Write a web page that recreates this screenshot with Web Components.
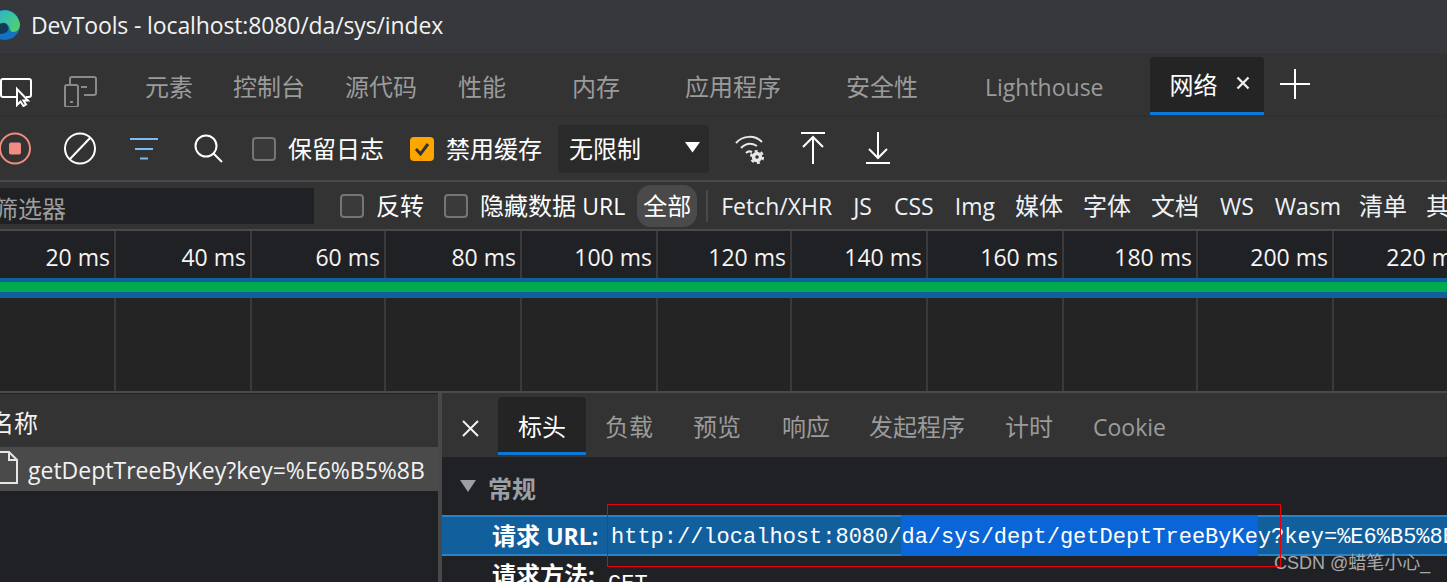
<!DOCTYPE html>
<html lang="zh-CN">
<head>
<meta charset="utf-8">
<title>DevTools</title>
<style>
html,body{margin:0;padding:0;background:#202124;}
body{width:1447px;height:582px;overflow:hidden;position:relative;font-family:"Open Sans","Noto Sans CJK SC",sans-serif;color:#fff;}
</style>
</head>
<body>
<title-bar>DevTools - localhost:8080/da/sys/index</title-bar>
<tab-strip></tab-strip>
<net-toolbar></net-toolbar>
<filter-bar></filter-bar>
<time-line></time-line>
<split-pane></split-pane>
<water-mark>CSDN @蜡笔小心_</water-mark>

<script>
const FONT = '"Open Sans","Noto Sans CJK SC",sans-serif';

class TitleBar extends HTMLElement{
    connectedCallback(){
        this.attachShadow({mode:"open"}).innerHTML = `
        <style>
            :host{display:flex;align-items:center;height:53px;background:#37383c;box-sizing:border-box;padding-bottom:4px;}
            svg{width:20px;height:34px;flex:none;margin-top:3px;}
            .t{margin-left:11px;font:23px/30px ${FONT};color:#f2f2f2;white-space:nowrap;letter-spacing:-.13px;}
        </style>
        <svg viewBox="0 0 20 34">
            <defs>
                <linearGradient id="eg" x1="0" y1="0" x2="1" y2="1"><stop offset="0" stop-color="#2cb5c9"/><stop offset="1" stop-color="#58d45f"/></linearGradient>
            </defs>
            <circle cx="5" cy="16" r="15" fill="#1272c4"/>
            <path d="M0 2C8 -1 18 4 20 15C20 20 17 23 13 23C9 23 11 18 7 15C4 13 1 14 0 15Z" fill="url(#eg)"/>
            <path d="M0 15C3 13 7 14 8 18C9 22 6 25 0 25Z" fill="#123a52"/>
        </svg>
        <div class="t"><slot></slot></div>`;
    }
}

class DtTab extends HTMLElement{
    connectedCallback(){
        this.attachShadow({mode:"open"}).innerHTML = `
        <style>
            :host{display:flex;align-items:center;height:100%;color:#9b9b9b;white-space:nowrap;font:24px/30px ${FONT};box-sizing:border-box;padding-top:2px;}
            :host([sel]){background:#242424;color:#fff;border-radius:4px 4px 0 0;box-shadow:inset 0 -3px 0 #0a78d7;}
        </style>
        <slot></slot>`;
    }
}

class TabStrip extends HTMLElement{
    connectedCallback(){
        const items = [["元素",145],["控制台",40],["源代码",40],["性能",41],["内存",66],["应用程序",65],["安全性",65],["Lighthouse",67]];
        this.attachShadow({mode:"open"}).innerHTML = `
        <style>
            :host{display:flex;align-items:stretch;height:64px;background:#333;box-sizing:border-box;padding:4px 0 1px;border-bottom:1px solid #2e2e2e;position:relative;}
            .ico{position:absolute;top:20px;}
            dt-tab{flex:none;}
            .sel{margin-left:46px;padding:0 0 2px 20px;width:114px;justify-content:flex-start;gap:18px;}
            .plus{margin-left:16px;align-self:center;margin-top:-4px;flex:none;}
            .x{margin-top:-4px;flex:none;}
            .lat{font-size:23px;}
        </style>
        <svg class="ico" style="left:0" width="33" height="34" viewBox="0 0 33 34" fill="none" stroke="#fff" stroke-width="2">
            <path d="M16 24H3C1.600 24 1 23.400 1 22V8C1 6.600 1.600 6 3 6H29C30.400 6 31 6.600 31 8V22C31 23.400 30.400 24 29 24H26"/>
            <path d="M17 16V32L20.500 28.500L23.500 33L26 31.500L23.500 27.500H28Z" fill="#333" stroke-width="2"/>
        </svg>
        <svg class="ico" style="left:64px" width="33" height="34" viewBox="0 0 33 34" fill="none" stroke="#8a8a8a" stroke-width="2">
            <path d="M6 11V6C6 4.500 7 4 8 4H30C31.500 4 32 5 32 6V20C32 21.500 31 22 30 22H20"/>
            <rect x="1" y="12" width="13" height="22" rx="2"/>
            <path d="M17 14H23M6 29H9"/>
        </svg>
        ${items.map(([t,m])=>`<dt-tab style="margin-left:${m}px" class="${t=="Lighthouse"?"lat":""}">${t}</dt-tab>`).join("")}
        <dt-tab class="sel" sel>网络
            <svg class="x" width="14" height="14" viewBox="0 0 14 14" stroke="#eee" stroke-width="2.400"><path d="M1.500 1.500L12.500 12.500M12.500 1.500L1.500 12.500"/></svg>
        </dt-tab>
        <svg class="plus" width="30" height="30" viewBox="0 0 30 30" stroke="#fff" stroke-width="2"><path d="M0 15H30M15 0V30"/></svg>`;
    }
}

class DtCheck extends HTMLElement{
    connectedCallback(){
        const on = this.hasAttribute("on");
        this.attachShadow({mode:"open"}).innerHTML = `
        <style>
            :host{display:inline-flex;align-items:center;gap:12px;white-space:nowrap;font:24px/30px ${FONT};color:#fff;}
            .b{width:24px;height:24px;box-sizing:border-box;border-radius:4px;border:2px solid #757575;background:#3a3a3a;flex:none;}
            .on{background:#ffa500;border:0;}
        </style>
        <span class="b ${on?"on":""}">${on?`<svg width="24" height="24" viewBox="0 0 24 24" fill="none" stroke="#333" stroke-width="3"><path d="M6 12L10.500 17L18 7"/></svg>`:""}</span>
        <span><slot></slot></span>`;
    }
}

class NetToolbar extends HTMLElement{
    connectedCallback(){
        this.attachShadow({mode:"open"}).innerHTML = `
        <style>
            :host{display:flex;align-items:center;height:63px;background:#333;position:relative;}
            svg{flex:none;display:block;}
            .sel{margin-left:16px;width:151px;height:48px;background:#2a2a2a;border-radius:4px;box-sizing:border-box;padding:0 11px;display:flex;align-items:center;justify-content:space-between;font:24px/30px ${FONT};}
        </style>
        <svg style="margin-left:-1px" width="33" height="33" viewBox="0 0 33 33" fill="none">
            <circle cx="16" cy="16.500" r="15" stroke="#f28b82" stroke-width="2"/><rect x="10" y="10.500" width="12" height="12" rx="2" fill="#f28b82"/>
        </svg>
        <svg style="margin-left:32px" width="32" height="33" viewBox="0 0 32 33" fill="none" stroke="#fff" stroke-width="2">
            <circle cx="16" cy="16.500" r="15"/><path d="M6 27L26 6"/>
        </svg>
        <svg style="margin-left:34px" width="28" height="22" viewBox="0 0 28 22" fill="none" stroke="#7cbcf0" stroke-width="2">
            <path d="M0 1H28M5 11H23M10 20.500H18"/>
        </svg>
        <svg style="margin-left:36px" width="29" height="29" viewBox="0 0 29 29" fill="none" stroke="#fff" stroke-width="2">
            <circle cx="12" cy="12" r="10.500"/><path d="M19.500 19.500L28 28"/>
        </svg>
        <dt-check style="margin-left:29px">保留日志</dt-check>
        <dt-check style="margin-left:26px" on>禁用缓存</dt-check>
        <div class="sel"><span>无限制</span>
            <svg style="margin-right:-3px;margin-top:-4px" width="17" height="12" viewBox="0 0 17 12" fill="#fff"><path d="M1 1H16L8.500 11.500Z"/></svg>
        </div>
        <svg style="margin-left:26px" width="32" height="30" viewBox="0 0 32 30" fill="none" stroke="#e8e8e8" stroke-width="2">
            <path d="M1 9C8 1 20 1 27 8M6 14C11 9 17 9 22 12M11 19C13 17 15 17 17 18"/>
            <circle cx="22" cy="23" r="3.500" stroke-width="3.400"/>
            <circle cx="22" cy="23" r="6" stroke-width="2.200" stroke-dasharray="3 3.280"/>
        </svg>
        <svg style="margin-left:34px;margin-top:-2px" width="24" height="32" viewBox="0 0 24 32" fill="none" stroke="#fff" stroke-width="2">
            <path d="M0 1H24M12 32V5M2 15L12 5L22 15"/>
        </svg>
        <svg style="margin-left:41px;margin-top:-2px" width="24" height="32" viewBox="0 0 24 32" fill="none" stroke="#fff" stroke-width="2">
            <path d="M0 31H24M12 0V26M3 17L12 26L21 17"/>
        </svg>`;
    }
}

class FilterBar extends HTMLElement{
    connectedCallback(){
        const types = [["Fetch/XHR",13,1],["JS",21,1],["CSS",22,1],["Img",21,1],["媒体",20],["字体",20],["文档",20],["WS",21,1],["Wasm",21,1],["清单",18],["其他",19]];
        this.attachShadow({mode:"open"}).innerHTML = `
        <style>
            :host{display:flex;align-items:center;height:51px;box-sizing:border-box;background:#333;border-top:2px solid #4a4a4c;border-bottom:2px solid #4a4a4c;white-space:nowrap;font:24px/30px ${FONT};color:#eef2f6;overflow:hidden;}
            .in{width:314px;height:36px;background:#202124;color:#9e9e9e;flex:none;box-sizing:border-box;padding-left:0;margin-top:1px;line-height:42px;text-indent:-6px;overflow:hidden;}
            .all{margin-left:12px;width:60px;height:42px;line-height:42px;text-align:center;background:#4a4a4a;border-radius:14px;flex:none;color:#fff;}
            .sep{width:2px;height:32px;background:#4a4a4c;margin-left:9px;flex:none;}
            span{flex:none;padding-top:1px;}
            .lat{font-size:23px;}
        </style>
        <div class="in">筛选器</div>
        <dt-check style="margin-left:26px">反转</dt-check>
        <dt-check style="margin-left:20px">隐藏数据 <span class="lat">URL</span></dt-check>
        <div class="all">全部</div>
        <div class="sep"></div>
        ${types.map(([t,m,l])=>`<span class="${l?"lat":""}" style="margin-left:${m}px">${t}</span>`).join("")}`;
    }
}

class TimeLine extends HTMLElement{
    connectedCallback(){
        const w = [116,136,134,136,136,134,136,136,134,136,136];
        const cell = (i,body) => `<div class="c" style="width:${w[i]}px">${body}</div>`;
        this.attachShadow({mode:"open"}).innerHTML = `
        <style>
            :host{display:block;height:160px;background:#242424;position:relative;overflow:hidden;}
            .row{display:flex;height:100%;position:relative;}
            .c{box-sizing:border-box;flex:none;border-right:2px solid #3a3a3a;text-align:right;padding:11px 4px 0 0;font:23px/30px ${FONT};color:#f5f5f5;white-space:nowrap;}
            .top{position:absolute;left:0;right:0;top:0;height:47px;background:#202124;}
            .lane{position:absolute;left:0;right:0;top:47px;height:20px;box-sizing:border-box;padding-top:4px;background:#125f9e;}
            .lane i{display:block;height:10px;background:#00aa4f;}
        </style>
        <div class="top"></div>
        <div class="row">
            ${w.map((_,i)=>cell(i,(i+1)*20+" ms")).join("")}
        </div>
        <div class="lane"><i></i></div>`;
    }
}

class SplitPane extends HTMLElement{
    connectedCallback(){
        const tabs = [["负载",19],["预览",40],["响应",41],["发起程序",39],["计时",40],["Cookie",40,1]];
        this.attachShadow({mode:"open"}).innerHTML = `
        <style>
            :host{display:flex;height:191px;box-sizing:border-box;border-top:2px solid #4a4a4c;background:#202124;overflow:hidden;white-space:nowrap;font:24px/30px ${FONT};}
            .l{width:438px;flex:none;border-right:4px solid #48484a;}
            .lh{height:53px;background:#333;line-height:58px;text-indent:-10px;overflow:hidden;color:#f2f2f2;margin-top:1px;}
            .lr{height:44px;background:#4a4a4a;display:flex;align-items:center;color:#f2f2f2;}
            .lr svg{margin-left:-7px;flex:none;margin-top:-4px;}
            .lr span{margin-left:9px;font-size:23px;padding-top:2px;}
            .r{flex:1;min-width:0;}
            .rt{height:64px;background:#333;display:flex;align-items:stretch;box-sizing:border-box;padding-top:4px;color:#9b9b9b;}
            .rt svg{margin:23px 0 0 20px;flex:none;}
            .rt .on{margin-left:19px;width:88px;background:#242424;color:#fff;text-align:center;line-height:60px;border-radius:4px 4px 0 0;box-shadow:inset 0 -3px 0 #0a78d7;margin-bottom:2px;}
            .rt span{line-height:60px;}
            .rt .lat{font-size:23px;}
            .sec{height:58px;display:flex;align-items:center;color:#9aa0a6;font-weight:700;box-sizing:border-box;padding-top:6px;}
            .sec svg{margin-left:18px;margin-right:12px;margin-top:-6px;}
            .url{height:41px;box-shadow:inset 0 2px 0 #2a82c8,inset 0 -2px 0 #2a82c8;background:#125f9e;display:flex;align-items:center;overflow:hidden;}
            .k{margin-left:50px;font-weight:700;color:#fff;flex:none;width:119px;}
            .k i{font-style:normal;font-size:23px;}
            .v{font:22px/30px "Liberation Mono",monospace;color:#fff;margin-top:5px;}
            .v b{font-weight:400;background:#0a66d6;padding:12px 0 12px 0;}
            .m{height:30px;display:flex;align-items:center;margin-top:4px;}
            .m .v{margin:19px 0 0 -3px;}
        </style>
        <div class="l">
            <div class="lh">名称</div>
            <div class="lr">
                <svg width="26" height="33" viewBox="0 0 26 33" fill="none" stroke="#e6e6e6" stroke-width="2"><path d="M1 1H16L24 9V32H1Z"/><path d="M16 1V9H24"/></svg>
                <span>getDeptTreeByKey?key=%E6%B5%8B</span>
            </div>
        </div>
        <div class="r">
            <div class="rt">
                <svg width="17" height="17" viewBox="0 0 17 17" stroke="#f2f2f2" stroke-width="2"><path d="M1 1L16 16M16 1L1 16"/></svg>
                <div class="on">标头</div>
                ${tabs.map(([t,m,l])=>`<span class="${l?"lat":""}" style="margin-left:${m}px">${t}</span>`).join("")}
            </div>
            <div class="sec">
                <svg width="16" height="12" viewBox="0 0 16 12" fill="#9aa0a6"><path d="M0 0H16L8 12Z"/></svg>
                常规
            </div>
            <div class="url">
                <span class="k">请求 <i>URL:</i></span>
                <span class="v">http://localhost:8080/<b>da/sys/dept/getDeptTreeByKe</b>y?key=%E6%B5%8B</span>
            </div>
            <div class="m">
                <span class="k">请求方法:</span>
                <span class="v">GET</span>
            </div>
        </div>`;
    }
}

class WaterMark extends HTMLElement{
    connectedCallback(){
        this.attachShadow({mode:"open"}).innerHTML = `
        <style>
            :host{position:absolute;left:1274px;top:551px;font:18px/24px "Liberation Sans","Noto Sans CJK SC",sans-serif;color:#a9a9a9;white-space:nowrap;}
            i{position:absolute;left:-667px;top:-47px;width:672px;height:61px;border:1px solid #e8000a;pointer-events:none;}
        </style>
        <i></i><slot></slot>`;
    }
}

customElements.define('title-bar',TitleBar);
customElements.define('dt-tab',DtTab);
customElements.define('tab-strip',TabStrip);
customElements.define('dt-check',DtCheck);
customElements.define('net-toolbar',NetToolbar);
customElements.define('filter-bar',FilterBar);
customElements.define('time-line',TimeLine);
customElements.define('split-pane',SplitPane);
customElements.define('water-mark',WaterMark);
</script>
</body>
</html>
